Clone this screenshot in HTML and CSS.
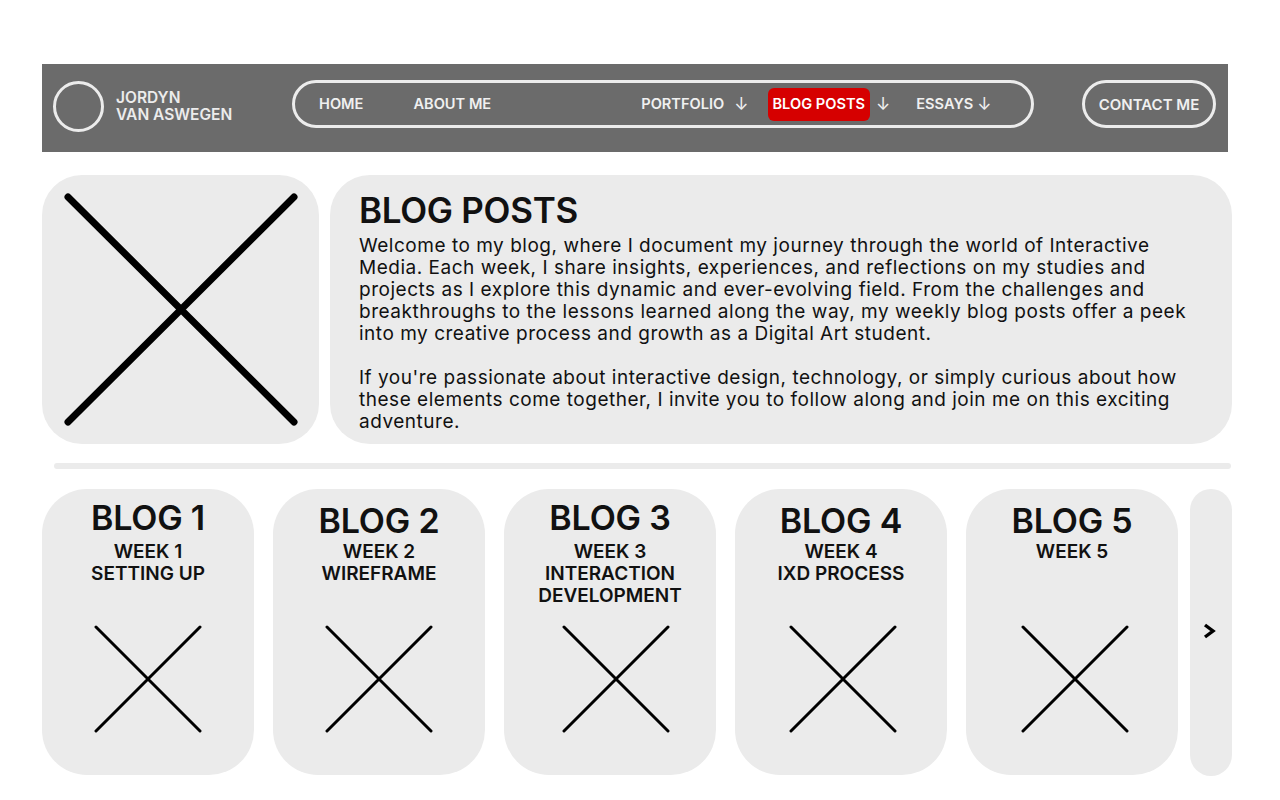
FILE: index.html
```html
<!DOCTYPE html>
<html lang="en">
<head>
<meta charset="utf-8">
<title>Blog Posts - Jordyn van Aswegen</title>
<link rel="stylesheet" href="styles.css">
</head>
<body>
<div class="page">
  <header class="topbar">
    <div class="brand">
      <div class="logo"></div>
      <div class="name">JORDYN<br>VAN ASWEGEN</div>
    </div>
    <nav class="nav">
      <a class="nav-item home">HOME</a>
      <a class="nav-item about">ABOUT ME</a>
      <a class="nav-item portfolio">PORTFOLIO</a><span class="arr a-port">↓</span>
      <a class="nav-item active">BLOG POSTS</a><span class="arr a-blog">↓</span>
      <a class="nav-item essays">ESSAYS</a><span class="arr a-ess">↓</span>
    </nav>
    <a class="contact">CONTACT ME</a>
  </header>

  <section class="intro">
    <div class="intro-img">
      <svg viewBox="0 0 277 269" width="277" height="269"><path d="M26 22 L252 247 M252 22 L26 247" stroke="#000" stroke-width="7" stroke-linecap="round"/></svg>
    </div>
    <div class="intro-text">
      <h1>BLOG POSTS</h1>
      <p>Welcome to my blog, where I document my journey through the world of Interactive Media. Each week, I share insights, experiences, and reflections on my studies and projects as I explore this dynamic and ever-evolving field. From the challenges and breakthroughs to the lessons learned along the way, my weekly blog posts offer a peek into my creative process and growth as a Digital Art student.</p>
      <p>If you're passionate about interactive design, technology, or simply curious about how these elements come together, I invite you to follow along and join me on this exciting adventure.</p>
    </div>
  </section>

  <div class="divider"></div>

  <section class="cards">
    <article class="card">
      <h2>BLOG 1</h2>
      <p class="sub">WEEK 1<br>SETTING UP</p>
      <svg class="x" viewBox="0 0 108 108" width="108" height="108"><path d="M2 2 L106 106 M106 2 L2 106" stroke="#000" stroke-width="3" stroke-linecap="round"/></svg>
    </article>
    <article class="card">
      <h2 class="low">BLOG 2</h2>
      <p class="sub">WEEK 2<br>WIREFRAME</p>
      <svg class="x" viewBox="0 0 108 108" width="108" height="108"><path d="M2 2 L106 106 M106 2 L2 106" stroke="#000" stroke-width="3" stroke-linecap="round"/></svg>
    </article>
    <article class="card">
      <h2>BLOG 3</h2>
      <p class="sub">WEEK 3<br>INTERACTION<br>DEVELOPMENT</p>
      <svg class="x x3" viewBox="0 0 108 108" width="108" height="108"><path d="M2 2 L106 106 M106 2 L2 106" stroke="#000" stroke-width="3" stroke-linecap="round"/></svg>
    </article>
    <article class="card">
      <h2 class="low">BLOG 4</h2>
      <p class="sub">WEEK 4<br>IXD PROCESS</p>
      <svg class="x x4" viewBox="0 0 108 108" width="108" height="108"><path d="M2 2 L106 106 M106 2 L2 106" stroke="#000" stroke-width="3" stroke-linecap="round"/></svg>
    </article>
    <article class="card">
      <h2 class="low">BLOG 5</h2>
      <p class="sub">WEEK 5</p>
      <svg class="x x5" viewBox="0 0 108 108" width="108" height="108"><path d="M2 2 L106 106 M106 2 L2 106" stroke="#000" stroke-width="3" stroke-linecap="round"/></svg>
    </article>
    <div class="next">
      <svg viewBox="0 0 14 16" width="14" height="16"><path d="M3 2 L11 8 L3 14" fill="none" stroke="#000" stroke-width="3.4" stroke-linejoin="miter"/></svg>
    </div>
  </section>
</div>
</body>
</html>
```

FILE: styles.css
```css
* { box-sizing: border-box; }
html, body { margin: 0; padding: 0; background: #fff; }
body {
  font-family: Inter, "Noto Sans", "Liberation Sans", sans-serif;
  color: #111;
}
.page {
  padding: 64px 0 0 42px;
  width: 1232px;
}
.topbar {
  width: 1186px;
  height: 88px;
  background: #6b6b6b;
  display: flex;
  align-items: center;
  padding: 0 12px 8px 11px;
}
.brand {
  width: 239px;
  display: flex;
  align-items: center;
  gap: 12px;
}
.logo {
  width: 51px;
  height: 51px;
  border: 3px solid #ececec;
  border-radius: 50%;
  margin-top: 5px;
}
.name {
  color: #ececec;
  font-weight: 600;
  font-size: 15.5px;
  line-height: 17px;
  margin-top: 4px;
}
.nav {
  width: 742px;
  height: 48px;
  border: 3px solid #ececec;
  border-radius: 24px;
  display: flex;
  align-items: center;
  padding-left: 24px;
}
.nav-item, .arr {
  color: #f0f0f0;
  font-size: 14.6px;
  font-weight: 600;
  white-space: nowrap;
}
.arr { font-weight: 400; font-size: 17px; }
.about { margin-left: 50px; }
.portfolio { margin-left: 150px; }
.a-port { margin-left: 10px; }
.active {
  margin-left: 19px;
  background: #d60000;
  border-radius: 6px;
  padding: 7px 5px 8px;
  color: #fff;
}
.a-blog { margin-left: 6px; }
.essays { margin-left: 26px; }
.a-ess { margin-left: 4px; }
.contact {
  margin-left: auto;
  width: 134px;
  height: 48px;
  border: 3px solid #ececec;
  border-radius: 24px;
  display: flex;
  align-items: center;
  justify-content: center;
  color: #f0f0f0;
  font-size: 15px;
  font-weight: 600;
}
.intro {
  margin-top: 23px;
  display: flex;
  gap: 11px;
  height: 269px;
}
.intro-img {
  width: 277px;
  flex: none;
  background: #ebebeb;
  border-radius: 40px;
}
.intro-img svg { display: block; }
.intro-text {
  flex: 1;
  background: #ebebeb;
  border-radius: 40px;
  padding: 15px 37px 0 29px;
}
.intro-text h1 {
  margin: 0 0 5px;
  font-size: 35px;
  font-weight: 600;
  line-height: 40px;
  letter-spacing: -0.3px;
}
.intro-text p {
  margin: 0 0 22px 0;
  font-size: 19px;
  line-height: 22px;
  font-weight: 400;
  letter-spacing: 0.52px;
}
.divider {
  margin: 19px 0 0 12px;
  width: 1177px;
  height: 6px;
  border-radius: 3px;
  background: #ebebeb;
}
.cards {
  margin-top: 20px;
  display: flex;
  gap: 19px;
}
.card {
  width: 212px;
  height: 286px;
  flex: none;
  background: #ebebeb;
  border-radius: 45px;
  display: flex;
  flex-direction: column;
  align-items: center;
  position: relative;
  padding-top: 12px;
}
.card h2 {
  margin: 0;
  font-size: 34px;
  font-weight: 600;
  line-height: 34px;
  letter-spacing: -0.2px;
}
.card .sub {
  margin: 6px 0 0;
  font-size: 19px;
  font-weight: 600;
  line-height: 22px;
  text-align: center;
}
.card h2.low { margin-top: 3px; }
.card h2.low + .sub { margin-top: 3px; }
.card .x {
  position: absolute;
  left: 52px;
  top: 136px;
}
.card .x3 { left: 58px; }
.card .x4 { left: 54px; }
.card .x5 { left: 55px; }
.next {
  width: 42px;
  height: 287px;
  margin-left: -7px;
  background: #ebebeb;
  border-radius: 21px;
  display: flex;
  align-items: center;
  justify-content: center;
}
.next svg { display: block; margin: 0 4px 4px 0; }
```
